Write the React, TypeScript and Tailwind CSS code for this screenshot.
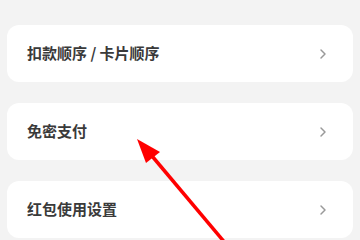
import { ChevronRight } from "lucide-react";

const items = ["扣款顺序 / 卡片顺序", "免密支付", "红包使用设置"];

export default function App() {
  return (
    <div className="relative w-[360px] h-[240px] overflow-hidden bg-[#f3f3f3] font-['Noto_Sans_CJK_SC','Noto_Sans',sans-serif]">
      <div className="flex flex-col gap-[21px] pt-[25px] pl-[7px] pr-[7px]">
        {items.map((label) => (
          <div
            key={label}
            className="flex items-center justify-between h-[57px] rounded-xl bg-white pl-[20px] pr-[22px]"
          >
            <span className="text-[15px] font-semibold text-[#3a3a3a]">{label}</span>
            <ChevronRight className="w-[16px] h-[16px] text-[#999999]" strokeWidth={2.2} />
          </div>
        ))}
      </div>

      {/* red annotation arrow */}
      <svg className="absolute left-0 top-0" width="360" height="240" viewBox="0 0 360 240">
        <line x1="152" y1="156" x2="226" y2="244" stroke="#ff0000" strokeWidth="3.5" />
        <polygon points="137,139 160,152 146,163" fill="#ff0000" />
      </svg>
    </div>
  );
}
